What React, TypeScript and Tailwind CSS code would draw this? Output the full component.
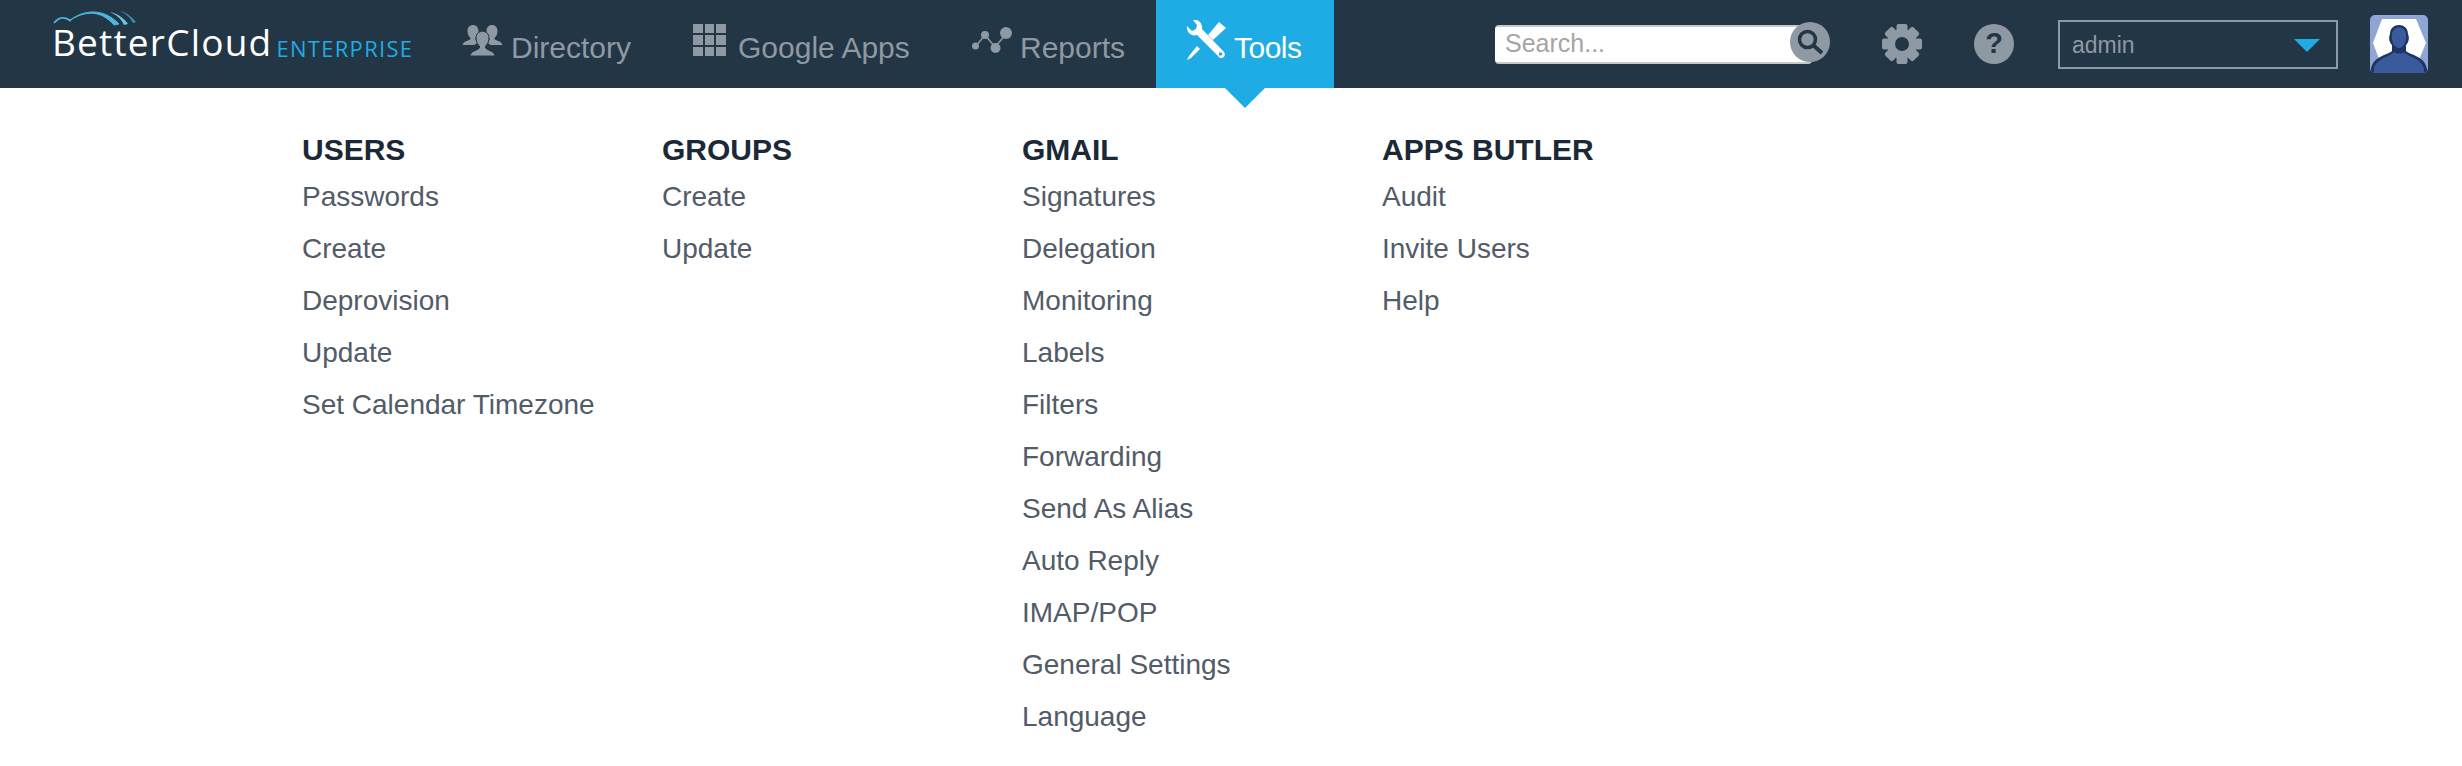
const columns = [
  { title: 'USERS', links: ['Passwords', 'Create', 'Deprovision', 'Update', 'Set Calendar Timezone'] },
  { title: 'GROUPS', links: ['Create', 'Update'] },
  {
    title: 'GMAIL',
    links: ['Signatures', 'Delegation', 'Monitoring', 'Labels', 'Filters', 'Forwarding', 'Send As Alias', 'Auto Reply', 'IMAP/POP', 'General Settings', 'Language'],
  },
  { title: 'APPS BUTLER', links: ['Audit', 'Invite Users', 'Help'] },
];

function LogoArc() {
  return (
    <svg viewBox="0 0 90 24" className="absolute left-[52px] top-[9px] h-[24px] w-[90px]" fill="none">
      <path d="M2 14 C7 8 12 7 19 12" stroke="#4db5de" strokeWidth="1.8" />
      <path d="M17 12 C32 2 48 0 62 16 L67 15 C52 -1 32 0 17 12Z" fill="#4db5de" stroke="#4db5de" strokeWidth="1" />
      <path d="M58 3 C66 5 71 8 76 15 L72 16 C69 9 64 6 58 3Z" fill="#6fc6e8" />
      <path d="M68 2 C75 4 79 7 84 13 L81 14 C78 8 74 5 68 2Z" fill="#3b8fb5" />
    </svg>
  );
}

function DirectoryIcon() {
  return (
    <svg viewBox="0 0 40 32" className="h-[32px] w-[41px]" fill="#8f99a3">
      <path d="M5 7 C5 -1 16 -1 16 7 C16 11 14 13 13 14 L13 16 L16 18 L12 21 L0 21 C1 17 6 17 8 15 L8 14 C7 13 5 11 5 7Z" />
      <path d="M35 7 C35 -1 24 -1 24 7 C24 11 26 13 27 14 L27 16 L24 18 L28 21 L40 21 C39 17 34 17 32 15 L32 14 C33 13 35 11 35 7Z" />
      <path d="M13.5 14 C13.5 5 26.5 5 26.5 14 C26.5 18 24.5 21 23 22 L23 24 C26 27 32 27 32.5 32 L7.5 32 C8 27 14 27 17 24 L17 22 C15.5 21 13.5 18 13.5 14Z" stroke="#233646" strokeWidth="1" />
    </svg>
  );
}

function GridIcon() {
  const cells = [0, 1, 2, 3, 4, 5, 6, 7, 8];
  return (
    <div className="grid h-[32px] w-[33px] grid-cols-3 grid-rows-3 gap-[2px]">
      {cells.map((c) => (
        <div key={c} className="bg-[#8f99a3]" />
      ))}
    </div>
  );
}

function ReportsIcon() {
  return (
    <svg viewBox="0 0 40 27" className="h-[27px] w-[40px]" fill="#8f99a3">
      <path d="M4 19 L13 8 L23 20 L35 6" fill="none" stroke="#8f99a3" strokeWidth="1.5" />
      <circle cx="3.5" cy="19" r="3.5" />
      <circle cx="13" cy="8" r="4" />
      <circle cx="23.5" cy="21" r="5" />
      <circle cx="34" cy="6" r="6" />
    </svg>
  );
}

function ToolsIcon() {
  return (
    <svg viewBox="0 0 40 40" className="h-[40px] w-[40px]" fill="#fff">
      <path d="M1 6 L6 11 L10 9 L11 5 L7 0 C12 -1 17 3 16 9 L38 32 C40 35 38 39 34 38 L33 37 L11 15 C5 17 0 12 1 6Z" />
      <circle cx="34.5" cy="34" r="1.8" fill="#1fabe3" />
      <path d="M22 15 L33 2 L40 8 L27 20Z" />
      <path d="M11 26 L14 29 L5 38 L1 40 L3 36Z" />
    </svg>
  );
}

function GearIcon() {
  const teeth = [0, 45, 90, 135];
  return (
    <svg viewBox="0 0 40 40" className="h-[40px] w-[40px]">
      {teeth.map((a) => (
        <rect key={a} x="14.5" y="0" width="11" height="40" rx="2" fill="#8f99a3" transform={`rotate(${a} 20 20)`} />
      ))}
      <circle cx="20" cy="20" r="15" fill="#8f99a3" />
      <circle cx="20" cy="20" r="7" fill="#233646" />
    </svg>
  );
}

function SearchIcon() {
  return (
    <svg viewBox="0 0 40 40" className="h-[40px] w-[40px]">
      <circle cx="20" cy="20" r="20" fill="#8f99a3" />
      <circle cx="17.5" cy="17.5" r="8" fill="none" stroke="#233646" strokeWidth="3.5" />
      <path d="M23 23 L32 31" stroke="#233646" strokeWidth="4" />
    </svg>
  );
}

function Avatar() {
  return (
    <svg viewBox="0 0 58 58" className="h-[58px] w-[58px] rounded-[5px]">
      <rect width="58" height="58" fill="#8fa6d4" />
      <path d="M12 4 H46 L56 28 L46 52 H12 L3 28Z" fill="#fff" />
      <path d="M20 19 C20 7 38 7 38 19 C40 24 38 28 36 30 L36 36 C40 40 55 41 57 54 L57 58 H1 L1 54 C3 41 18 40 22 36 L22 30 C20 28 18 24 20 19Z" fill="#1e3463" />
      <path d="M22 20 C22 10 36 10 36 20 C37 27 33 33 29 33 C25 33 21 27 22 20Z M24 37 C26 39 32 39 34 37 C38 42 52 43 54 54 L54 58 H4 L4 54 C6 43 20 42 24 37Z" fill="#3b5a9b" />
    </svg>
  );
}

type TabProps = { label: string; icon: React.ReactNode; active?: boolean; className: string; labelClass?: string };

function Tab({ label, icon, active, className, labelClass = 'ml-[8px]' }: TabProps) {
  return (
    <div className={`relative flex h-[88px] items-center ${className} ${active ? 'bg-[#1fabe3] text-white' : 'text-[#8f99a3]'}`}>
      <div className="-mt-[8px]">{icon}</div>
      <span className={`mt-[6px] text-[30px] ${labelClass}`}>{label}</span>
      {active && (
        <div className="absolute left-[69px] top-[88px] h-0 w-0 border-x-[20px] border-t-[20px] border-x-transparent border-t-[#1fabe3]" />
      )}
    </div>
  );
}

export default function App() {
  return (
    <div className="min-h-[766px] bg-white font-['Liberation_Sans',Arial,sans-serif]">
      <header className="flex h-[88px] items-center bg-[#233646]">
        <div className="relative flex h-[88px] w-[432px] shrink-0 items-center pl-[52px]">
          <LogoArc />
          <span className="mt-[-5px] font-['Open_Sans',sans-serif] text-[37px] font-normal tracking-[1.2px] text-white">BetterCloud</span>
          <span className="ml-[4px] mt-[9px] font-['Open_Sans',sans-serif] text-[22px] font-normal tracking-[1.3px] text-[#1fabe3]">ENTERPRISE</span>
        </div>
        <Tab label="Directory" icon={<DirectoryIcon />} className="w-[231px] pl-[30px]" />
        <Tab label="Google Apps" icon={<GridIcon />} className="w-[279px] pl-[30px]" labelClass="ml-[12px]" />
        <Tab label="Reports" icon={<ReportsIcon />} className="w-[214px] pl-[30px]" />
        <Tab label="Tools" icon={<ToolsIcon />} active className="w-[178px] pl-[30px]" labelClass="ml-[8px] tracking-[-0.5px]" />

        <div className="relative ml-[161px] flex h-[39px] w-[317px] items-center rounded-[4px] border-t-2 border-b-2 border-[#c8c8c8] bg-white pl-[10px] text-[25px] text-[#a5a5a5]">
          Search...
          <div className="absolute -right-[18px] -top-[5px]">
            <SearchIcon />
          </div>
        </div>
        <div className="ml-[70px]">
          <GearIcon />
        </div>
        <div className="ml-[52px] flex h-[40px] w-[40px] items-center justify-center rounded-full bg-[#8f99a3] text-[29px] font-bold text-[#233646]">
          ?
        </div>
        <div className="ml-[44px] flex h-[49px] w-[280px] items-center justify-between border-2 border-[#8f99a3] pl-[12px] pr-[16px] pt-[2px] text-[23px] text-[#8f99a3]">
          admin
          <div className="h-0 w-0 border-x-[13px] border-t-[13px] border-x-transparent border-t-[#1fabe3]" />
        </div>
        <div className="ml-[32px]">
          <Avatar />
        </div>
      </header>

      <div className="flex pl-[302px] pt-[44px]">
        {columns.map((col) => (
          <div key={col.title} className="w-[360px] shrink-0">
            <h2 className="text-[30px] font-bold leading-[36px] text-[#1a2935]">{col.title}</h2>
            <ul className="mt-[3px]">
              {col.links.map((link) => (
                <li key={link} className="h-[52px] text-[28px] leading-[52px] text-[#525b68]">
                  {link}
                </li>
              ))}
            </ul>
          </div>
        ))}
      </div>
    </div>
  );
}
